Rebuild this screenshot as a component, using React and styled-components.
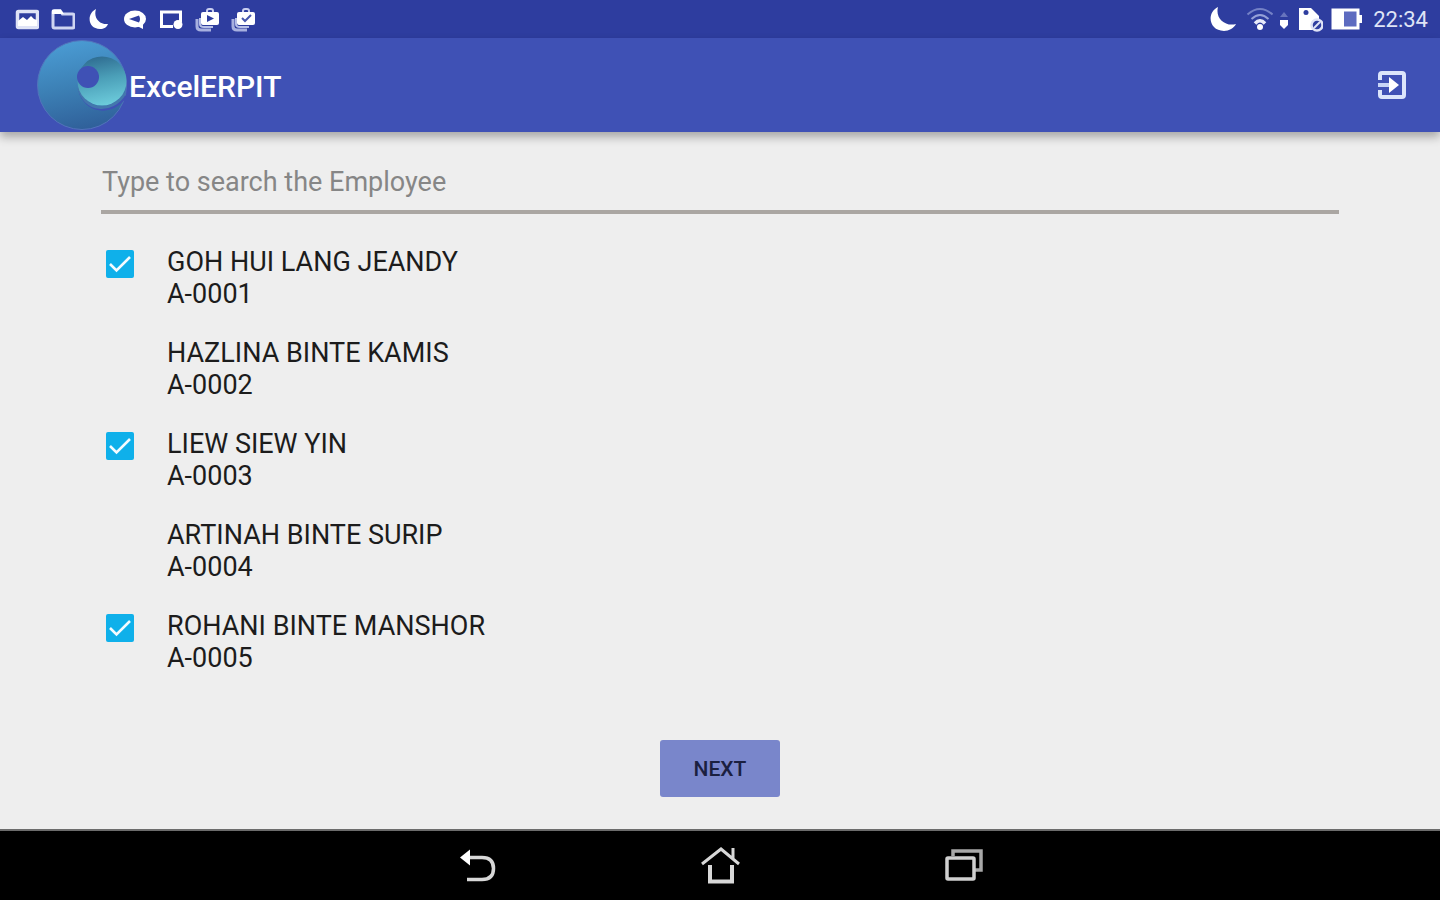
import React, { useState } from 'react'
import styled, { createGlobalStyle } from 'styled-components'

const GlobalStyle = createGlobalStyle`
    * { box-sizing: border-box; }
    body {
        margin: 0;
        font-family: Roboto, "Liberation Sans", sans-serif;
        background: #eeeeee;
        color: #1c1c1c;
    }
`

const Screen = styled.div`
    min-height: 100vh;
    display: flex;
    flex-direction: column;
`

const StatusBar = styled.div`
    display: flex;
    justify-content: space-between;
    align-items: center;
    height: 38px;
    padding: 2px 12px 0 15px;
    background: #2e3d9f;
    color: #dfe4f6;
`

const StatusGroup = styled.div`
    display: flex;
    align-items: center;
    gap: ${props => props.gap}px;
`

const Clock = styled.time`
    margin-left: 4px;
    font-size: 22px;
    line-height: 28px;
`

const AppBar = styled.header`
    display: flex;
    align-items: center;
    height: 94px;
    padding: 0 32px 0 36px;
    background: #3f51b5;
    box-shadow: 0 5px 9px rgba(0, 0, 0, 0.3);
`

const Title = styled.h1`
    flex: 1;
    margin: 0;
    padding-top: 3px;
    color: #ffffff;
    font-size: 30px;
    line-height: 32px;
    font-weight: 500;
`

const IconButton = styled.button`
    display: flex;
    padding: 0;
    border: 0;
    background: none;
    cursor: pointer;
`

const Content = styled.main`
    flex: 1;
    display: flex;
    flex-direction: column;
    padding: 32px 101px;
`

const Search = styled.input`
    width: 100%;
    height: 50px;
    padding: 0 1px 10px;
    border: 0;
    border-bottom: 4px solid #aaa6a2;
    outline: none;
    background: none;
    color: #1c1c1c;
    font-family: inherit;
    font-size: 27px;

    &::placeholder {
        color: #868686;
        opacity: 1;
    }
`

const List = styled.ul`
    display: flex;
    flex-direction: column;
    gap: 27px;
    margin: 32px 0 0;
    padding: 0;
    list-style: none;
`

const Row = styled.label`
    display: flex;
    align-items: flex-start;
    gap: 33px;
    padding-left: 5px;
    font-size: 27px;
    line-height: 32px;
    cursor: pointer;
`

const Tick = styled.input`
    appearance: none;
    flex: none;
    width: 28px;
    height: 28px;
    margin: 4px 0 0;
    border-radius: 2px;

    &:checked {
        background: #0fb0ea;
    }
`

const TickCell = styled.span`
    display: grid;

    > * {
        grid-area: 1 / 1;
    }

    svg {
        margin-top: 4px;
        pointer-events: none;
    }
`

const Name = styled.span`
    display: block;
`

const NextButton = styled.button`
    align-self: center;
    width: 120px;
    height: 57px;
    margin-top: 66px;
    border: 0;
    border-radius: 3px;
    background: #7986cb;
    color: #1b2040;
    font-family: inherit;
    font-size: 21px;
    font-weight: 500;
    cursor: pointer;
`

const NavBar = styled.nav`
    display: flex;
    justify-content: center;
    gap: 203px;
    height: 72px;
    border-top: 2px solid #6c6c6c;
    background: #000000;
`

const StatusIcon = ({ width = 24, children }) => (
    <svg width={width} height="28" viewBox={`0 0 ${width} 28`} fill="none" aria-hidden="true">
        {children}
    </svg>
)

const Briefcase = ({ children }) => (
    <StatusIcon>
        <path d="M2 13v7.500q0 3.500 4 3.500h10" stroke="#a7b0df" strokeWidth="3" />
        <path d="M5 12v6q0 3 4 3h9" stroke="#b7c0e8" strokeWidth="2" />
        <path d="M12 7V5q0-2 2-2h2q2 0 2 2v2" stroke="#c9cff0" strokeWidth="2" />
        <rect x="6" y="6" width="18" height="13" rx="2" fill="#fff" />
        {children}
    </StatusIcon>
)

const Logo = () => (
    <svg width="93" height="92" viewBox="0 0 93 92" aria-hidden="true">
        <defs>
            <linearGradient id="ring" x1="0.4" y1="0" x2="0.6" y2="1">
                <stop offset="0" stopColor="#4a9bd3" />
                <stop offset="0.5" stopColor="#3c80b5" />
                <stop offset="1" stopColor="#2f5f99" />
            </linearGradient>
            <linearGradient id="inner" x1="0.4" y1="0" x2="0.6" y2="1">
                <stop offset="0" stopColor="#2f6d92" />
                <stop offset="0.45" stopColor="#4b9fb8" />
                <stop offset="1" stopColor="#6dccdc" />
            </linearGradient>
        </defs>
        <circle cx="46" cy="46" r="44.500" fill="url(#ring)" stroke="#5273bb" strokeWidth="1" />
        <path d="M44 52C49 72 75 78 90 57" fill="none" stroke="#3f51b5" strokeWidth="3" />
        <path d="M43 49C48 72 76 76 89 54" fill="none" stroke="#4377ad" strokeWidth="3" />
        <circle cx="66" cy="42" r="24.500" fill="url(#inner)" />
        <circle cx="52" cy="38" r="11" fill="#3f51b5" />
    </svg>
)

const employees = [
    { id: 'A-0001', name: 'GOH HUI LANG JEANDY' },
    { id: 'A-0002', name: 'HAZLINA BINTE KAMIS' },
    { id: 'A-0003', name: 'LIEW SIEW YIN' },
    { id: 'A-0004', name: 'ARTINAH BINTE SURIP' },
    { id: 'A-0005', name: 'ROHANI BINTE MANSHOR' },
]

const Employee = ({ employee, checked, onToggle }) => (
    <li>
        <Row>
            <TickCell>
                <Tick type="checkbox" checked={checked} onChange={() => onToggle(employee.id)} />
                {checked && (
                    <svg width="28" height="28" viewBox="0 0 28 28" fill="none" aria-hidden="true">
                        <path d="M4 14l6.500 6.500L24 7" stroke="#f4fbff" strokeWidth="2.600" />
                    </svg>
                )}
            </TickCell>
            <span>
                <Name>{employee.name}</Name>
                <Name>{employee.id}</Name>
            </span>
        </Row>
    </li>
)

export default () => {
    const [query, setQuery] = useState('')
    const [selected, setSelected] = useState(['A-0001', 'A-0003', 'A-0005'])

    const toggle = id =>
        setSelected(selected.includes(id) ? selected.filter(s => s !== id) : [...selected, id])

    const visible = employees.filter(e =>
        (e.name + ' ' + e.id).toLowerCase().includes(query.toLowerCase())
    )

    return (
        <Screen>
            <GlobalStyle />
            <StatusBar>
                <StatusGroup gap={12}>
                    {/* picture */}
                    <StatusIcon>
                        <rect x="2.500" y="5.500" width="20" height="16" rx="1" stroke="#dfe3f6" strokeWidth="3.500" />
                        <path d="M3 20v-5l5-4 4 3 4-4 3 3 3 1v6H3z" fill="#fff" />
                    </StatusIcon>
                    {/* folder */}
                    <StatusIcon>
                        <path d="M2 20.500V6q0-1.500 1.500-1.500H9l2.500 3.500h10q1.500 0 1.500 1.500v11q0 1.500-1.500 1.500h-18Q2 22 2 20.500z" stroke="#cfd5f2" strokeWidth="3" />
                        <path d="M1 4h9l3 4H1z" fill="#fff" />
                    </StatusIcon>
                    {/* do not disturb */}
                    <StatusIcon>
                        <path d="M9 3C-1 8 1 23 13 23c4 0 7-2 8-5C13 19 6 12 9 3z" fill="#fff" />
                    </StatusIcon>
                    {/* message */}
                    <StatusIcon>
                        <ellipse cx="12" cy="13" rx="11" ry="8.500" fill="#fff" />
                        <path d="M14 20l6 3v-6z" fill="#fff" />
                        <path d="M6 13l10-3.500q2 3.500 0 7z" fill="#2e3d9f" />
                    </StatusIcon>
                    {/* screen capture */}
                    <StatusIcon>
                        <path d="M14 20.500H2.500V6h19v10" stroke="#fff" strokeWidth="3" />
                        <circle cx="19" cy="18.500" r="4.500" fill="#fff" />
                    </StatusIcon>
                    <Briefcase>
                        <path d="M12 9l7 3.500-7 3.500z" fill="#2e3d9f" />
                    </Briefcase>
                    <Briefcase>
                        <path d="M11 12l3 3 6-6" stroke="#4656ad" strokeWidth="2" />
                    </Briefcase>
                </StatusGroup>
                <StatusGroup gap={7}>
                    <StatusIcon width={29}>
                        <path d="M9 1C-3 7 0 25 15 25c5 0 10-3 12-7C16 21 6 12 9 1z" fill="#fff" />
                    </StatusIcon>
                    {/* wifi */}
                    <StatusIcon width={28}>
                        <path d="M2.500 8.500Q15-2.500 27.500 8.500" stroke="#7481c6" strokeWidth="2" />
                        <path d="M6.500 13Q15 5 23.500 13" stroke="#95a0d8" strokeWidth="2" />
                        <path d="M10 17.500q5-5.500 10 0" stroke="#e8ebfa" strokeWidth="3.500" />
                        <circle cx="15" cy="21" r="3" fill="#fff" />
                    </StatusIcon>
                    <StatusIcon width={8}>
                        <path d="M0 11l4-5 4 5z" fill="#6774bd" />
                        <path d="M0 14h8v5l-4 4-4-4z" fill="#fff" />
                    </StatusIcon>
                    {/* sd card */}
                    <StatusIcon width={28}>
                        <path d="M4 2h12l8 8v14H4z" fill="#fff" />
                        <circle cx="11" cy="6.500" r="2.500" fill="#2e3d9f" />
                        <circle cx="22" cy="19" r="5.500" fill="#2e3d9f" stroke="#dfe3f6" strokeWidth="2.500" />
                        <path d="M19 22l6-6" stroke="#dfe3f6" strokeWidth="2" />
                    </StatusIcon>
                    {/* battery */}
                    <StatusIcon width={32}>
                        <rect x="3" y="4" width="25" height="18" fill="#5d6bc0" stroke="#fff" strokeWidth="3" />
                        <path d="M3 4h11v18H3zM28 9h4v8h-4z" fill="#fff" />
                    </StatusIcon>
                    <Clock>22:34</Clock>
                </StatusGroup>
            </StatusBar>

            <AppBar>
                <Logo />
                <Title>ExcelERPIT</Title>
                <IconButton type="button" aria-label="Log out">
                    <svg width="32" height="32" viewBox="0 0 32 32" fill="none">
                        <path d="M4 11V6q0-2 2-2h20q2 0 2 2v20q0 2-2 2H6q-2 0-2-2v-5" stroke="#dbe5fb" strokeWidth="4" />
                        <path d="M2 16h14" stroke="#c7d5f7" strokeWidth="4" />
                        <path d="M13 8l10 8-10 8z" fill="#fff" />
                    </svg>
                </IconButton>
            </AppBar>

            <Content>
                <Search
                    aria-label="Search employee"
                    placeholder="Type to search the Employee"
                    value={query}
                    onChange={e => setQuery(e.target.value)}
                />
                <List>
                    {visible.map(e => (
                        <Employee key={e.id} employee={e} checked={selected.includes(e.id)} onToggle={toggle} />
                    ))}
                </List>
                <NextButton type="button">NEXT</NextButton>
            </Content>

            <NavBar>
                <IconButton type="button" aria-label="Back">
                    <svg width="40" height="69" viewBox="0 0 40 69" fill="none">
                        <path d="M12 26.500h13q11.500 0 11.500 11t-11.500 11H10" stroke="#d8d8d8" strokeWidth="3.500" />
                        <path d="M3 26.500l10-8v16z" fill="#fff" />
                    </svg>
                </IconButton>
                <IconButton type="button" aria-label="Home">
                    <svg width="40" height="69" viewBox="0 0 40 69" fill="none">
                        <path d="M2 33l19-15 18 15M33 17v12" stroke="#d8d8d8" strokeWidth="3" />
                        <path d="M10 34v16.500h22V34" stroke="#d8d8d8" strokeWidth="4" />
                    </svg>
                </IconButton>
                <IconButton type="button" aria-label="Recent apps">
                    <svg width="40" height="69" viewBox="0 0 40 69" fill="none">
                        <path d="M10 25v-5h28v19h-6" stroke="#a8a8a8" strokeWidth="3.500" />
                        <rect x="4" y="27" width="27" height="21" rx="1" stroke="#d0d0d0" strokeWidth="3.500" />
                    </svg>
                </IconButton>
            </NavBar>
        </Screen>
    )
}
